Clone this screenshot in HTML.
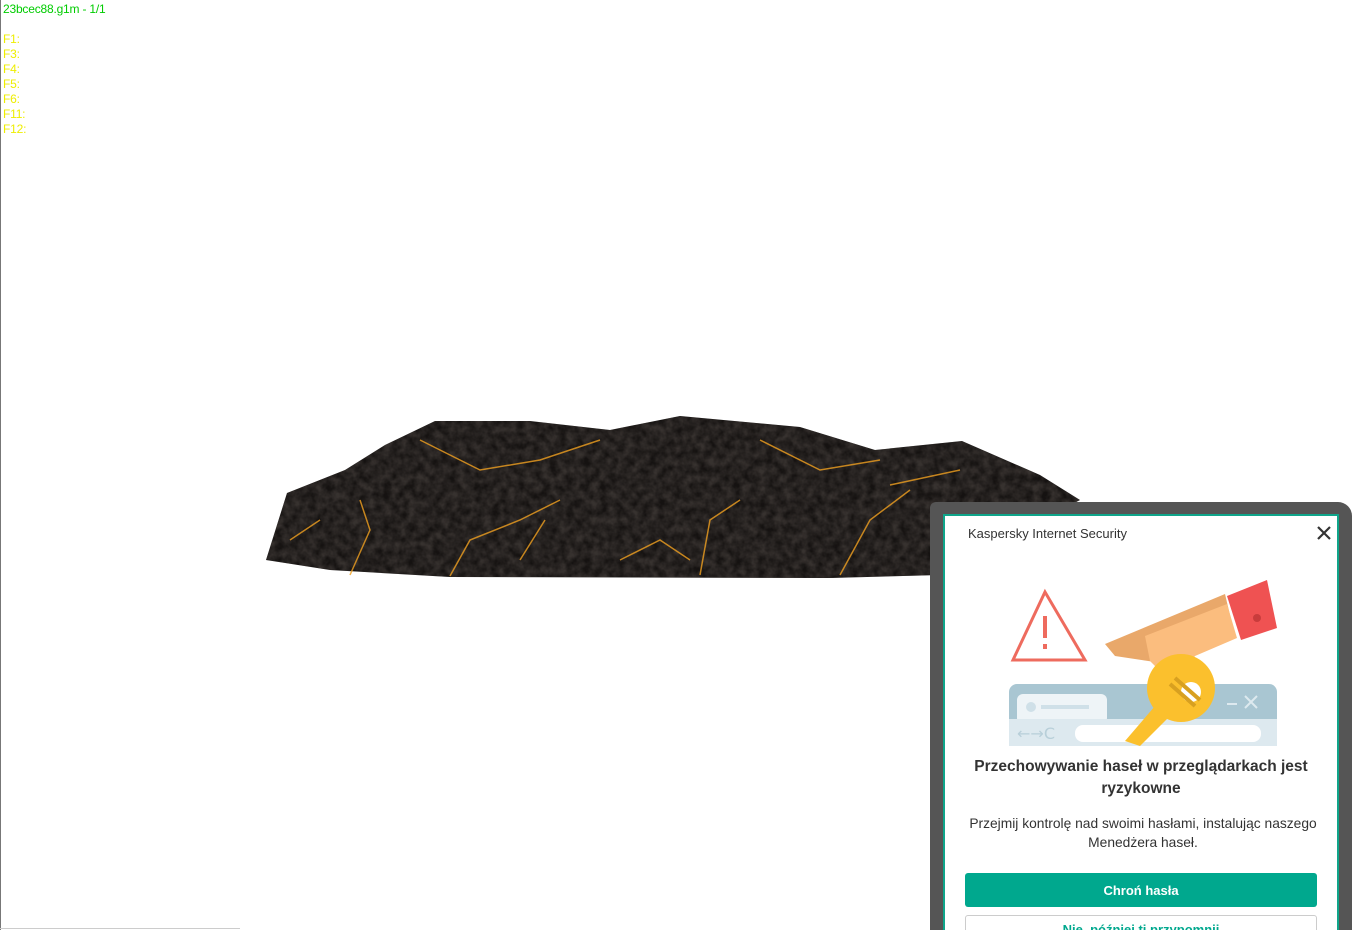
<!DOCTYPE html>
<html><head><meta charset="utf-8"><style>
html,body{margin:0;width:1354px;height:930px;overflow:hidden}
body{background:#fff;position:relative;font-family:"Liberation Sans",sans-serif}
.dbg{position:absolute;left:3px;font-size:12px;line-height:15px;letter-spacing:-0.2px}
.frame{position:absolute;left:930px;top:502px;width:422px;height:428px;background:#555;border-top-right-radius:14px;border-top-left-radius:6px}
.pop{position:absolute;left:943px;top:514px;width:392px;height:416px;background:#fff;border:2px solid #0fa58a;border-bottom:none;overflow:hidden}
.t{position:absolute;font-family:"Liberation Sans",sans-serif;color:#333}
</style></head><body>
<div style="position:absolute;left:0;top:0;width:1px;height:930px;background:#777"></div>
<div style="position:absolute;left:0;top:928px;width:240px;height:1px;background:#ccc"></div>
<div class="dbg" style="top:2px;color:#0c0">23bcec88.g1m - 1/1</div>
<div class="dbg" style="top:32px;color:#ee0">F1:<br>F3:<br>F4:<br>F5:<br>F6:<br>F11:<br>F12:</div>
<svg style="position:absolute;left:0;top:0" width="1354" height="930">
<defs>
<filter id="n"><feTurbulence type="fractalNoise" baseFrequency="0.12" numOctaves="3" seed="3"/><feColorMatrix values="0 0 0 0 0.12  0 0 0 0 0.1  0 0 0 0 0.09  0 0 0 -1.6 1.3"/><feComposite in2="SourceGraphic" operator="in"/></filter>
</defs>
<polygon points="266,560 287,493 345,470 385,445 435,421 530,421 610,430 680,416 800,427 875,450 962,441 1040,475 1080,500 940,575 830,578 450,577 330,570" fill="#151211"/>
<polygon points="266,560 287,493 345,470 385,445 435,421 530,421 610,430 680,416 800,427 875,450 962,441 1040,475 1080,500 940,575 830,578 450,577 330,570" fill="#3a3230" filter="url(#n)" opacity="0.45"/>
<g stroke="#f0a020" stroke-width="1.5" fill="none" opacity="0.8">
<path d="M350,575 L370,530 L360,500"/><path d="M450,576 L470,540 L520,520 L560,500"/><path d="M545,520 L520,560"/><path d="M700,575 L710,520 L740,500"/><path d="M840,575 L870,520 L910,490"/><path d="M420,440 L480,470 L540,460 L600,440"/><path d="M620,560 L660,540 L690,560"/><path d="M760,440 L820,470 L880,460"/><path d="M290,540 L320,520"/><path d="M890,485 L960,470"/>
</g>
</svg>
<div class="frame"></div>
<div class="pop">
<div class="t" style="left:23px;top:10px;font-size:13px">Kaspersky Internet Security</div>
<svg style="position:absolute;left:372px;top:10px" width="14" height="14"><path d="M1,1L13,13M13,1L1,13" stroke="#333" stroke-width="2.2"/></svg>
<svg style="position:absolute;left:60px;top:60px" width="280" height="175">
<polygon points="40,16 80,84 8,84" fill="none" stroke="#ee6b5e" stroke-width="3"/>
<rect x="38" y="40" width="4" height="22" fill="#ee6b5e"/><rect x="38" y="68" width="4" height="5" fill="#ee6b5e"/>
<rect x="4" y="108" width="268" height="62" rx="8" fill="#a9c6d2"/>
<rect x="12" y="118" width="90" height="30" rx="6" fill="#eef4f7"/>
<circle cx="26" cy="131" r="5" fill="#cfe0e8"/><rect x="36" y="129" width="48" height="4" fill="#cfe0e8"/>
<rect x="4" y="143" width="268" height="27" fill="#dde9ef"/>
<rect x="70" y="149" width="186" height="17" rx="8" fill="#fff"/>
<text x="12" y="163" font-size="16" fill="#b8cfd9" font-family="DejaVu Sans">←→C</text>
<path d="M222,128h10M240,120l12,12M252,120l-12,12" stroke="#dde9ef" stroke-width="2"/>
<path d="M100,68 L220,18 L230,60 L150,86 L110,80 Z" fill="#e9a86a"/>
<path d="M140,60 L222,28 L232,62 L190,80 L175,100 L160,100 L145,85 Z" fill="#fbbd7e"/>
<polygon points="222,20 262,4 272,52 236,64" fill="#ef5252"/>
<circle cx="252" cy="42" r="4" fill="#c93c3c"/>
<circle cx="176" cy="112" r="34" fill="#fbc02d"/>
<path d="M150,130 L120,165 L135,170 L165,140 Z" fill="#fbc02d"/>
<circle cx="186" cy="116" r="10" fill="#fff"/>
<path d="M165,108 L190,130 M170,102 L195,124" stroke="#d8a020" stroke-width="4"/>
</svg>
<div class="t" style="left:0;width:392px;text-align:center;top:240px;font-size:15.5px;line-height:22px;font-weight:bold">Przechowywanie haseł w przeglądarkach jest<br>ryzykowne</div>
<div class="t" style="left:0;width:396px;text-align:center;top:298px;font-size:13.8px;line-height:19px">Przejmij kontrolę nad swoimi hasłami, instalując naszego<br>Menedżera haseł.</div>
<div style="position:absolute;left:20px;top:357px;width:352px;height:34px;background:#00a88e;border-radius:3px;color:#fff;font-weight:bold;font-size:13px;text-align:center;line-height:36px">Chroń hasła</div>
<div style="position:absolute;left:20px;top:399px;width:350px;height:40px;border:1px solid #ccc;border-radius:3px;color:#00a88e;font-size:13px;font-weight:bold;text-align:center;line-height:28px">Nie, później ti przypomnij</div>
</div>
</body></html>
